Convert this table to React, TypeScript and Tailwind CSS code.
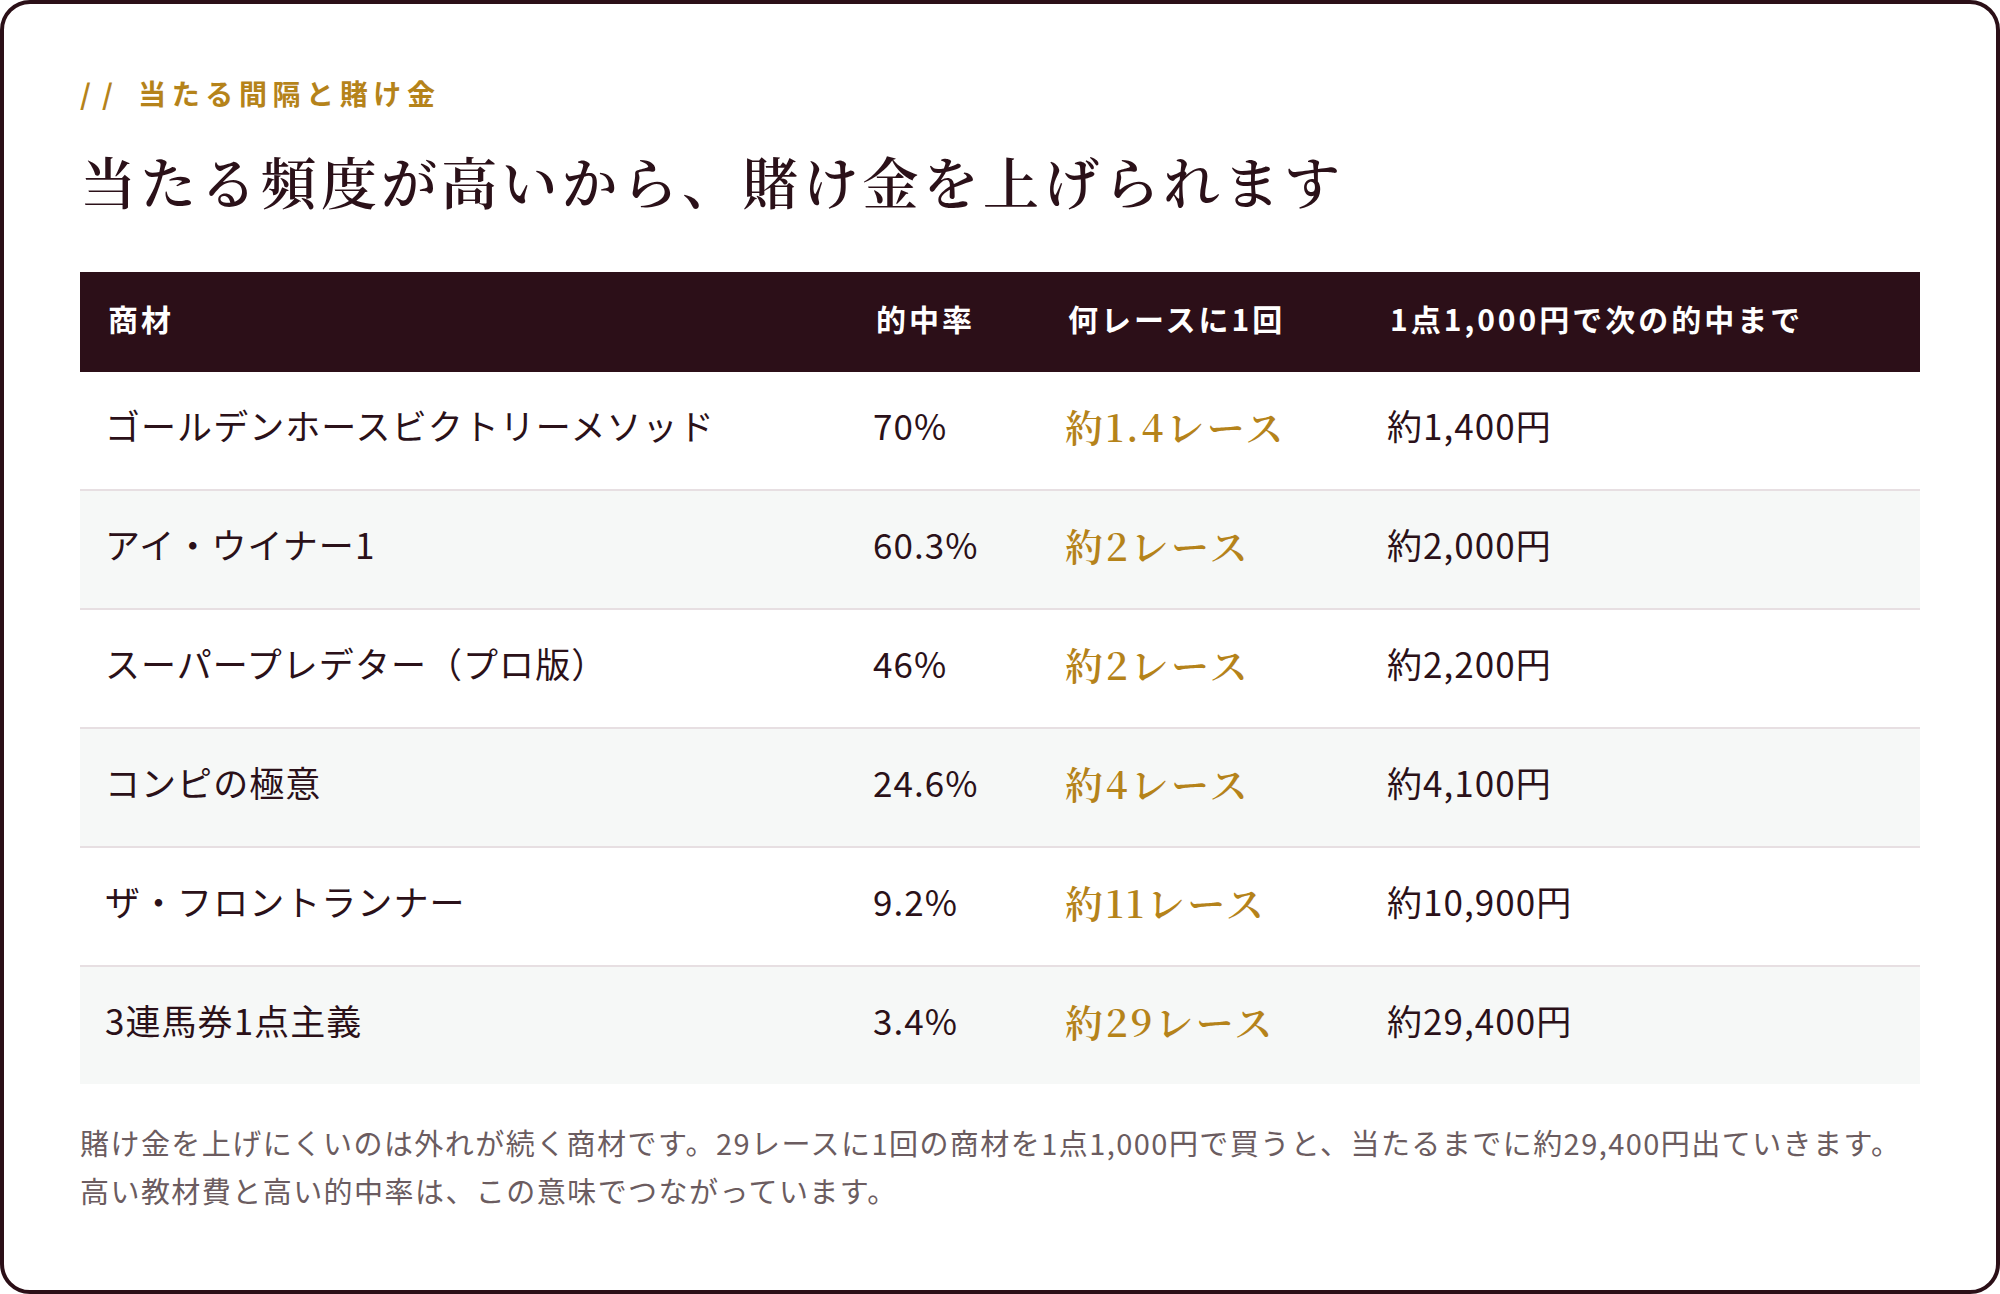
const ROWS: { name: string; rate: string; races: string; cost: string }[] = [
  { name: 'ゴールデンホースビクトリーメソッド', rate: '70%', races: '約1.4レース', cost: '約1,400円' },
  { name: 'アイ・ウイナー1', rate: '60.3%', races: '約2レース', cost: '約2,000円' },
  { name: 'スーパープレデター（プロ版）', rate: '46%', races: '約2レース', cost: '約2,200円' },
  { name: 'コンピの極意', rate: '24.6%', races: '約4レース', cost: '約4,100円' },
  { name: 'ザ・フロントランナー', rate: '9.2%', races: '約11レース', cost: '約10,900円' },
  { name: '3連馬券1点主義', rate: '3.4%', races: '約29レース', cost: '約29,400円' },
];

const SANS = "font-['Noto_Sans_CJK_JP','Noto_Sans',sans-serif]";
const SERIF = "font-['Noto_Serif_CJK_JP','Liberation_Serif','Noto_Sans_CJK_JP',serif]";

export default function App() {
  return (
    <div className={`min-h-screen bg-white ${SANS}`}>
      <div className="box-border h-[1294px] w-[2000px] rounded-[30px] border-4 border-[#2b0f17] bg-white px-[76px] pt-[71px]">
        {/* Eyebrow */}
        <p className="text-[28px] font-bold leading-[36px] tracking-[0.2em] text-[#b5831a]">
          <span className="mr-[14px] tracking-[0.4em]">//</span>当たる間隔と賭け金
        </p>

        {/* Heading */}
        <h2
          className={`mt-[29px] text-[56px] font-semibold leading-[80px] tracking-[0.075em] text-[#2b1119] ${SERIF}`}
        >
          当たる頻度が高いから、賭け金を上げられます
        </h2>

        {/* Table */}
        <div className="mt-[52px]">
          <div className="box-border grid h-[100px] grid-cols-[768px_192px_322px_1fr] items-center bg-[#2c0f18] pb-[8px] text-[30px] font-bold tracking-[0.1em] text-white">
            <div className="px-7">商材</div>
            <div className="px-7">的中率</div>
            <div className="px-7">何レースに1回</div>
            <div className="px-7">1点1,000円で次の的中まで</div>
          </div>
          {ROWS.map((row, i) => (
            <div
              key={row.name}
              className={`box-border grid grid-cols-[768px_192px_322px_1fr] items-center pb-[10px] text-[35px] font-normal tracking-[0.03em] text-[#2b1119] ${
                i > 0 ? 'h-[119px] border-t-2 border-[#e7dfe2]' : 'h-[117px]'
              } ${i % 2 === 1 ? 'bg-[#f6f8f7]' : 'bg-white'}`}
            >
              <div className="pl-[25px] pr-7">{row.name}</div>
              <div className="pl-[25px] pr-7">{row.rate}</div>
              <div className={`pl-[25px] pr-7 text-[38px] font-semibold tracking-[0.07em] text-[#b5831a] ${SERIF}`}>
                {row.races}
              </div>
              <div className="pl-[25px] pr-7">{row.cost}</div>
            </div>
          ))}
        </div>

        {/* Note */}
        <p className="mt-[34px] text-[29px] leading-[48px] tracking-[0.05em] text-[#6b5c60]">
          <span className="block whitespace-nowrap">
            賭け金を上げにくいのは外れが続く商材です。29レースに1回の商材を1点1,000円で買うと、当たるまでに約29,400円出ていきます。
          </span>
          <span className="block whitespace-nowrap">高い教材費と高い的中率は、この意味でつながっています。</span>
        </p>
      </div>
    </div>
  );
}
